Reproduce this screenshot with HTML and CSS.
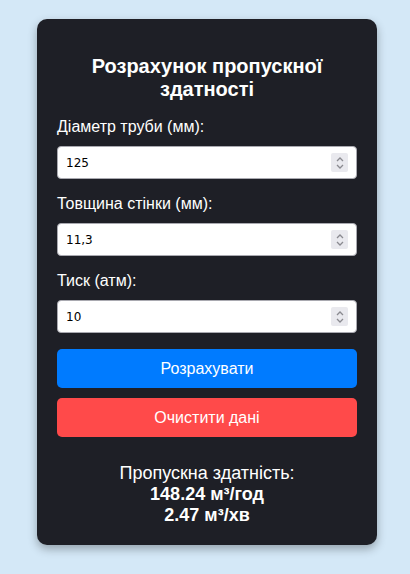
FILE: index.html
```html
<!DOCTYPE html>
<html lang="uk">
<head>
<meta charset="utf-8">
<title>Розрахунок пропускної здатності</title>
<link rel="stylesheet" href="styles.css">
</head>
<body>
<div class="card">
  <h2 class="title">Розрахунок пропускної здатності</h2>
  <label class="label" for="d">Діаметр труби (мм):</label>
  <div class="field">
    <input class="input" id="d" type="text" value="125">
    <span class="spin"><svg width="10" height="16" viewBox="0 0 10 16"><path d="M2 6 L5 3 L8 6 M2 10 L5 13 L8 10" fill="none" stroke="#8a8a90" stroke-width="1.3"/></svg></span>
  </div>
  <label class="label" for="t">Товщина стінки (мм):</label>
  <div class="field">
    <input class="input" id="t" type="text" value="11,3">
    <span class="spin"><svg width="10" height="16" viewBox="0 0 10 16"><path d="M2 6 L5 3 L8 6 M2 10 L5 13 L8 10" fill="none" stroke="#8a8a90" stroke-width="1.3"/></svg></span>
  </div>
  <label class="label" for="p">Тиск (атм):</label>
  <div class="field">
    <input class="input" id="p" type="text" value="10">
    <span class="spin"><svg width="10" height="16" viewBox="0 0 10 16"><path d="M2 6 L5 3 L8 6 M2 10 L5 13 L8 10" fill="none" stroke="#8a8a90" stroke-width="1.3"/></svg></span>
  </div>
  <button class="btn btn-blue" type="button">Розрахувати</button>
  <button class="btn btn-red" type="button">Очистити дані</button>
  <div class="result">
    <div>Пропускна здатність:</div>
    <div class="bold">148.24 м³/год</div>
    <div class="bold">2.47 м³/хв</div>
  </div>
</div>
</body>
</html>
```
FILE: styles.css
```css
html, body {
  margin: 0;
  padding: 0;
  background: #d4e8f7;
  font-family: "Liberation Sans", Arial, sans-serif;
}
body {
  padding-top: 19px;
  padding-bottom: 20px;
}
.card {
  width: 340px;
  box-sizing: border-box;
  margin-left: 37px;
  background: #1e1f26;
  border-radius: 10px;
  padding: 20px 20px 19px;
  color: #ffffff;
  box-shadow: 0 4px 10px rgba(0, 0, 0, 0.3);
}
.title {
  margin: 16px 0 17px;
  font-size: 20px;
  line-height: 23px;
  font-weight: bold;
  text-align: center;
}
.label {
  display: block;
  font-size: 16px;
  line-height: 18px;
  margin-bottom: 10px;
}
.field {
  position: relative;
  margin-bottom: 16px;
}
.input {
  display: block;
  width: 100%;
  box-sizing: border-box;
  height: 33px;
  margin: 0;
  padding: 0 8px;
  border: 1px solid #a9a9b0;
  border-radius: 4px;
  background: #ffffff;
  color: #000000;
  font-family: "DejaVu Sans", Verdana, sans-serif;
  font-size: 12px;
  outline: none;
}
.spin {
  position: absolute;
  right: 9px;
  top: 7px;
  width: 17px;
  height: 19px;
  background: #e9e9ee;
  border-radius: 2px;
  display: flex;
  align-items: center;
  justify-content: center;
}
.btn {
  display: block;
  width: 100%;
  height: 39px;
  border: none;
  border-radius: 5px;
  color: #ffffff;
  font-family: "Liberation Sans", Arial, sans-serif;
  font-size: 16px;
  padding: 0;
  cursor: pointer;
}
.btn-blue {
  background: #007bff;
  margin-bottom: 10px;
}
.btn-red {
  background: #ff4a4a;
}
.result {
  margin-top: 26px;
  text-align: center;
  font-size: 18px;
  line-height: 21px;
}
.bold {
  font-weight: bold;
}
```
